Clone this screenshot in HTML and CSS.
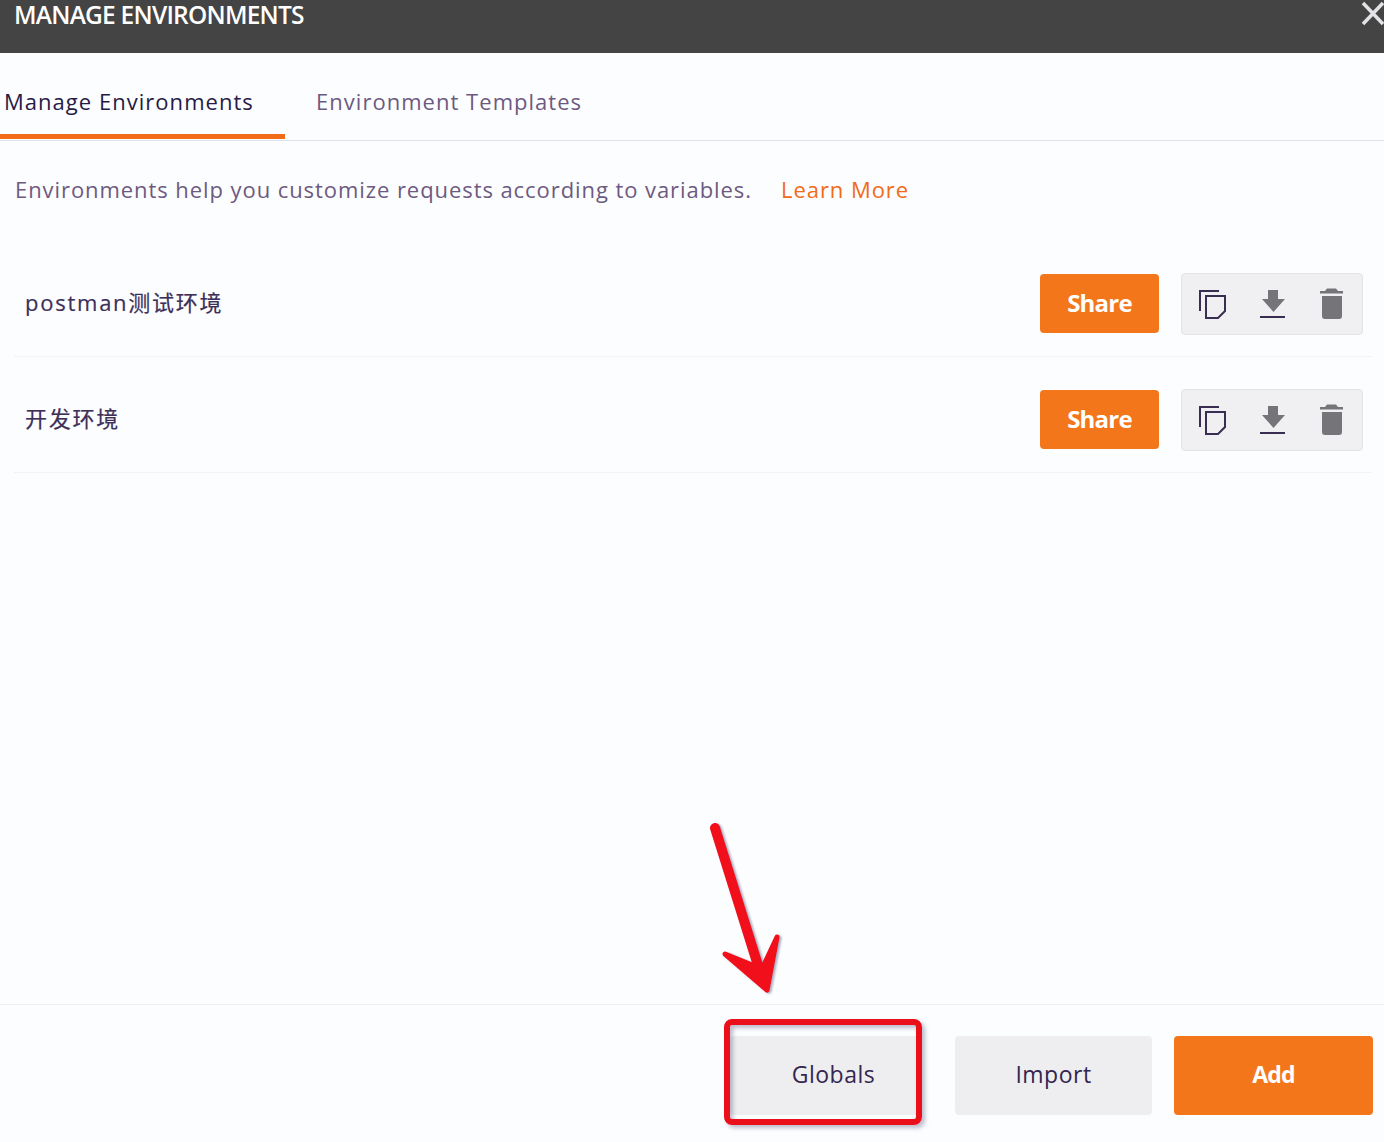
FILE: index.html
```html
<!DOCTYPE html>
<html lang="en">
<head>
<meta charset="utf-8">
<title>Manage Environments</title>
<link rel="stylesheet" href="styles.css">
</head>
<body>
<div class="modal">
  <header class="modal-head">
    <h1 class="modal-title">MANAGE ENVIRONMENTS</h1>
    <button class="close" aria-label="Close">
      <svg width="24" height="26" viewBox="0 0 24 26"><path d="M3 3 23 24M23 3 3 24" class="close-x"/></svg>
    </button>
  </header>
  <nav class="tabs">
    <div class="tab tab-active">Manage Environments</div>
    <div class="tab">Environment Templates</div>
  </nav>
  <main class="content">
    <p class="intro"><span>Environments help you customize requests according to variables.</span><a class="learn">Learn More</a></p>
    <div class="env-list">
      <div class="env-row">
        <div class="env-name">postman测试环境</div>
        <button class="btn-share">Share</button>
        <div class="tools">
          <span class="tool"><svg width="30" height="34" viewBox="0 0 30 34"><path class="ico-line" d="M3 24V4H22"/><path class="ico-line" d="M9 9H28V24L21 31H9Z"/></svg></span>
          <span class="tool"><svg width="30" height="34" viewBox="0 0 30 34"><path class="ico-fill" d="M11 3H21V12H28L16.500 25 5 12H11Z"/><path class="ico-line" d="M3 30H28"/></svg></span>
          <span class="tool"><svg width="30" height="34" viewBox="0 0 30 34"><path class="ico-fill" d="M8 4 10 1.500H19L21 4H26V6.500H3V4Z"/><path class="ico-fill" d="M5 9H25V29Q25 32 22 32H8Q5 32 5 29Z"/></svg></span>
        </div>
      </div>
      <div class="env-row">
        <div class="env-name">开发环境</div>
        <button class="btn-share">Share</button>
        <div class="tools">
          <span class="tool"><svg width="30" height="34" viewBox="0 0 30 34"><path class="ico-line" d="M3 24V4H22"/><path class="ico-line" d="M9 9H28V24L21 31H9Z"/></svg></span>
          <span class="tool"><svg width="30" height="34" viewBox="0 0 30 34"><path class="ico-fill" d="M11 3H21V12H28L16.500 25 5 12H11Z"/><path class="ico-line" d="M3 30H28"/></svg></span>
          <span class="tool"><svg width="30" height="34" viewBox="0 0 30 34"><path class="ico-fill" d="M8 4 10 1.500H19L21 4H26V6.500H3V4Z"/><path class="ico-fill" d="M5 9H25V29Q25 32 22 32H8Q5 32 5 29Z"/></svg></span>
        </div>
      </div>
    </div>
  </main>
  <footer class="modal-foot">
    <button class="btn btn-gray btn-globals">Globals</button>
    <button class="btn btn-gray btn-import">Import</button>
    <button class="btn btn-add">Add</button>
  </footer>
</div>
<div class="mark-box"></div>
<svg class="mark-arrow" width="100" height="190" viewBox="0 0 100 190">
  <path class="arrow-shaft" d="M16 13 62 160"/>
  <path class="arrow-head" d="M26 139 68 175 78 122 63 154Z"/>
</svg>
</body>
</html>
```
FILE: styles.css
```css
* { box-sizing: border-box; }
html, body { margin: 0; height: 100%; }
body {
  font-family: "Open Sans", "Noto Sans CJK SC", sans-serif;
  background: #fcfdff;
  overflow: hidden;
  position: relative;
}
.modal { height: 1142px; display: flex; flex-direction: column; }
.modal-head {
  height: 53px;
  flex: none;
  background: #444445;
  display: flex;
  justify-content: space-between;
  padding-left: 14px;
}
.modal-title {
  margin: 0;
  font-size: 24.5px;
  line-height: 30px;
  font-weight: 600;
  letter-spacing: -0.77px;
  color: #fff;
}
.close { background: none; border: 0; padding: 0; height: 26px; width: 24px; display: block; }
.close svg { display: block; }
.close-x { stroke: #e4e2e6; stroke-width: 3.5; fill: none; }
.tabs {
  height: 88px;
  flex: none;
  display: flex;
  border-bottom: 1px solid #dde1e8;
}
.tab {
  padding: 31px 0 0 0;
  margin-left: 31px;
  font-size: 22px;
  line-height: 34px;
  letter-spacing: 1.03px;
  color: #6d5a80;
}
.tab-active {
  margin: 0 0 -1px 0;
  width: 285px;
  padding-left: 4px;
  color: #271a45;
  height: 86px;
  border-bottom: 5px solid #f26b16;
}
.content { flex: 1; }
.intro {
  margin: 0;
  padding: 31px 0 0 15px;
  height: 100px;
  font-size: 22px;
  line-height: 34px;
  letter-spacing: 0.93px;
  color: #6d5a80;
  display: flex;
}
.learn { margin-left: 29px; color: #f26b16; letter-spacing: 0.95px; }
.env-list { margin: 0 12px 0 14px; }
.env-row {
  height: 116px;
  display: flex;
  align-items: center;
  padding: 10px 9px 0 11px;
  border-bottom: 1px solid #f1f3f6;
}
.env-name {
  flex: 1;
  font-size: 22px;
  margin-bottom: 6px;
  letter-spacing: 1.75px;
  color: #3e2f58;
  -webkit-text-stroke: 0.2px #3e2f58;
}
.btn-share {
  width: 119px;
  height: 59px;
  border: 0;
  padding: 0 0 3px;
  border-radius: 4px;
  background: #f4761b;
  color: #fff;
  font: 700 24px "Open Sans", sans-serif;
  letter-spacing: -0.8px;
  margin-right: 22px;
}
.tools {
  width: 182px;
  height: 62px;
  background: #f0f0f2;
  border: 1px solid #e2e3e7;
  border-radius: 4px;
  display: grid;
  grid-template-columns: repeat(3, 60px);
  align-items: center;
  justify-items: center;
}
.tool { display: block; height: 34px; }
.tool svg { display: block; }
.ico-line { fill: none; stroke: #3a2d52; stroke-width: 2; }
.ico-fill { fill: #757479; }
.modal-foot {
  height: 138px;
  flex: none;
  border-top: 1px solid #eef0f3;
  display: flex;
  align-items: flex-start;
  padding: 31px 11px 0 0;
  justify-content: flex-end;
}
.btn {
  height: 79px;
  border: 0;
  padding: 0 0 4px;
  border-radius: 4px;
  font: 400 23px "Open Sans", sans-serif;
}
.btn-gray { background: #eeeef0; color: #33264f; letter-spacing: 0.5px; }
.btn-globals { width: 188px; padding-left: 19px; margin-right: 37px; }
.btn-import { width: 197px; margin-right: 22px; }
.btn-add { width: 199px; background: #f4761b; color: #fff; font-weight: 700; letter-spacing: -0.8px; }
.mark-box {
  position: absolute;
  left: 724px;
  top: 1019px;
  width: 198px;
  height: 106px;
  border: 6px solid #ea0f1b;
  border-radius: 8px;
  box-shadow: 3px 3px 4px rgba(70, 70, 110, 0.35), inset 3px 3px 4px rgba(70, 70, 110, 0.35);
}
.mark-arrow {
  position: absolute;
  left: 699px;
  top: 815px;
  filter: drop-shadow(2px 1px 1px rgba(70, 70, 110, 0.45));
}
.arrow-shaft { fill: none; stroke: #f00f1a; stroke-width: 10; stroke-linecap: round; }
.arrow-head { fill: #f00f1a; stroke: #f00f1a; stroke-width: 5; stroke-linejoin: round; }
```
